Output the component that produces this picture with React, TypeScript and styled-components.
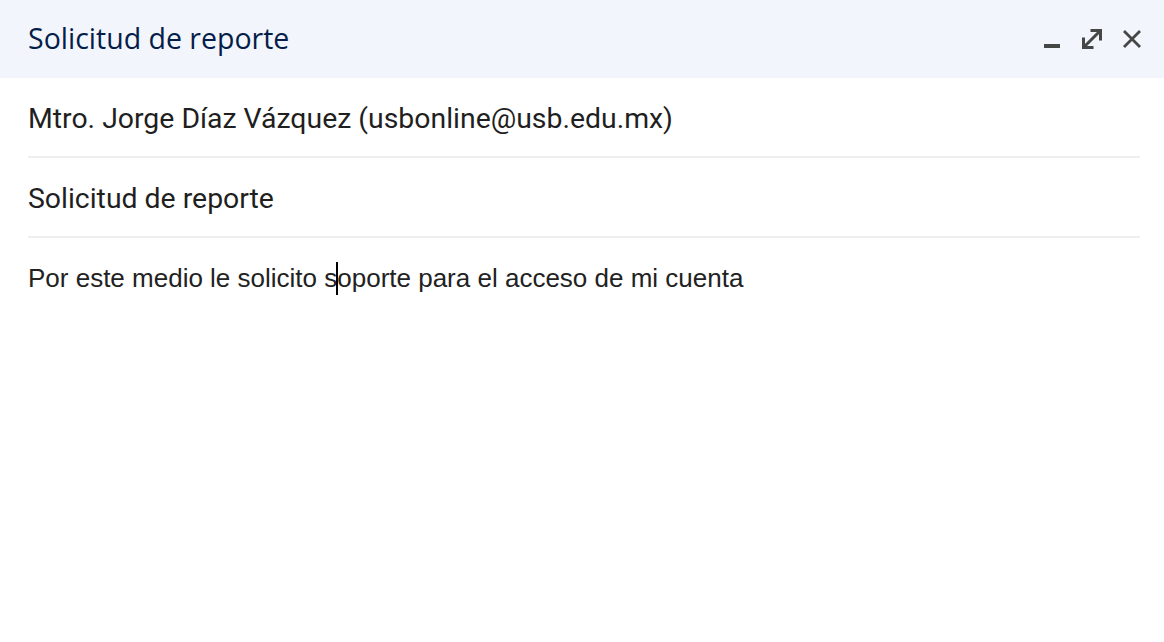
import React from "react";
import styled, { createGlobalStyle } from "styled-components";

const Global = createGlobalStyle`
  html, body { margin: 0; padding: 0; background: #ffffff; }
  body { width: 1164px; height: 642px; overflow: hidden; }
`;

const Window = styled.div`
  width: 1164px;
  height: 642px;
  display: flex;
  flex-direction: column;
  background: #ffffff;
`;

const Header = styled.div`
  height: 78px;
  flex: none;
  display: flex;
  align-items: center;
  justify-content: space-between;
  padding: 0 12px 0 28px;
  background: #f2f6fc;
  box-sizing: border-box;
`;

const Title = styled.div`
  font-family: "Open Sans", "Noto Sans", sans-serif;
  font-weight: 500;
  font-size: 28.5px;
  color: #041e49;
  line-height: 1;
  padding-bottom: 2px;
`;

const Actions = styled.div`
  display: flex;
  align-items: center;
`;

const IconBtn = styled.button`
  width: 40px;
  height: 40px;
  border: none;
  background: transparent;
  padding: 0;
  display: flex;
  align-items: center;
  justify-content: center;
  color: #444746;
  cursor: pointer;
  svg { display: block; }
`;

const Field = styled.div`
  margin: 0 24px 0 28px;
  height: 80px;
  box-sizing: border-box;
  border-bottom: 2px solid #efefef;
  display: flex;
  align-items: center;
  font-family: Roboto, "Liberation Sans", sans-serif;
  font-size: 28.4px;
  color: #1f1f1f;
  padding-top: 2px;
`;

const Body = styled.div`
  padding: 24px 28px;
  font-family: "Liberation Sans", Arial, sans-serif;
  font-size: 26px;
  color: #222222;
  line-height: 32px;
`;

const Caret = styled.span`
  display: inline-block;
  width: 2px;
  height: 33px;
  margin: 0 -1px;
  background: #000;
  vertical-align: -8px;
`;

export default function App() {
  return (
    <>
      <Global />
      <Window>
        <Header>
          <Title>Solicitud de reporte</Title>
          <Actions>
            <IconBtn aria-label="Minimizar">
              <svg width="20" height="20" viewBox="0 0 20 20">
                <rect x="2" y="15" width="16" height="4" fill="currentColor" />
              </svg>
            </IconBtn>
            <IconBtn aria-label="Pantalla completa">
              <svg width="20" height="20" viewBox="0 0 20 20" fill="none" stroke="currentColor" strokeWidth="3">
                <path d="M8.5 1.5H18.5V11.5" strokeLinejoin="miter" />
                <path d="M1.5 8.5V18.5H11.5" strokeLinejoin="miter" />
                <path d="M17 3L3 17" />
              </svg>
            </IconBtn>
            <IconBtn aria-label="Cerrar">
              <svg width="20" height="20" viewBox="0 0 20 20" fill="none" stroke="currentColor" strokeWidth="2.8">
                <path d="M2 2L18 18M18 2L2 18" />
              </svg>
            </IconBtn>
          </Actions>
        </Header>
        <Field>Mtro. Jorge Díaz Vázquez (usbonline@usb.edu.mx)</Field>
        <Field>Solicitud de reporte</Field>
        <Body>
          Por este medio le solicito s<Caret />oporte para el acceso de mi cuenta
        </Body>
      </Window>
    </>
  );
}
